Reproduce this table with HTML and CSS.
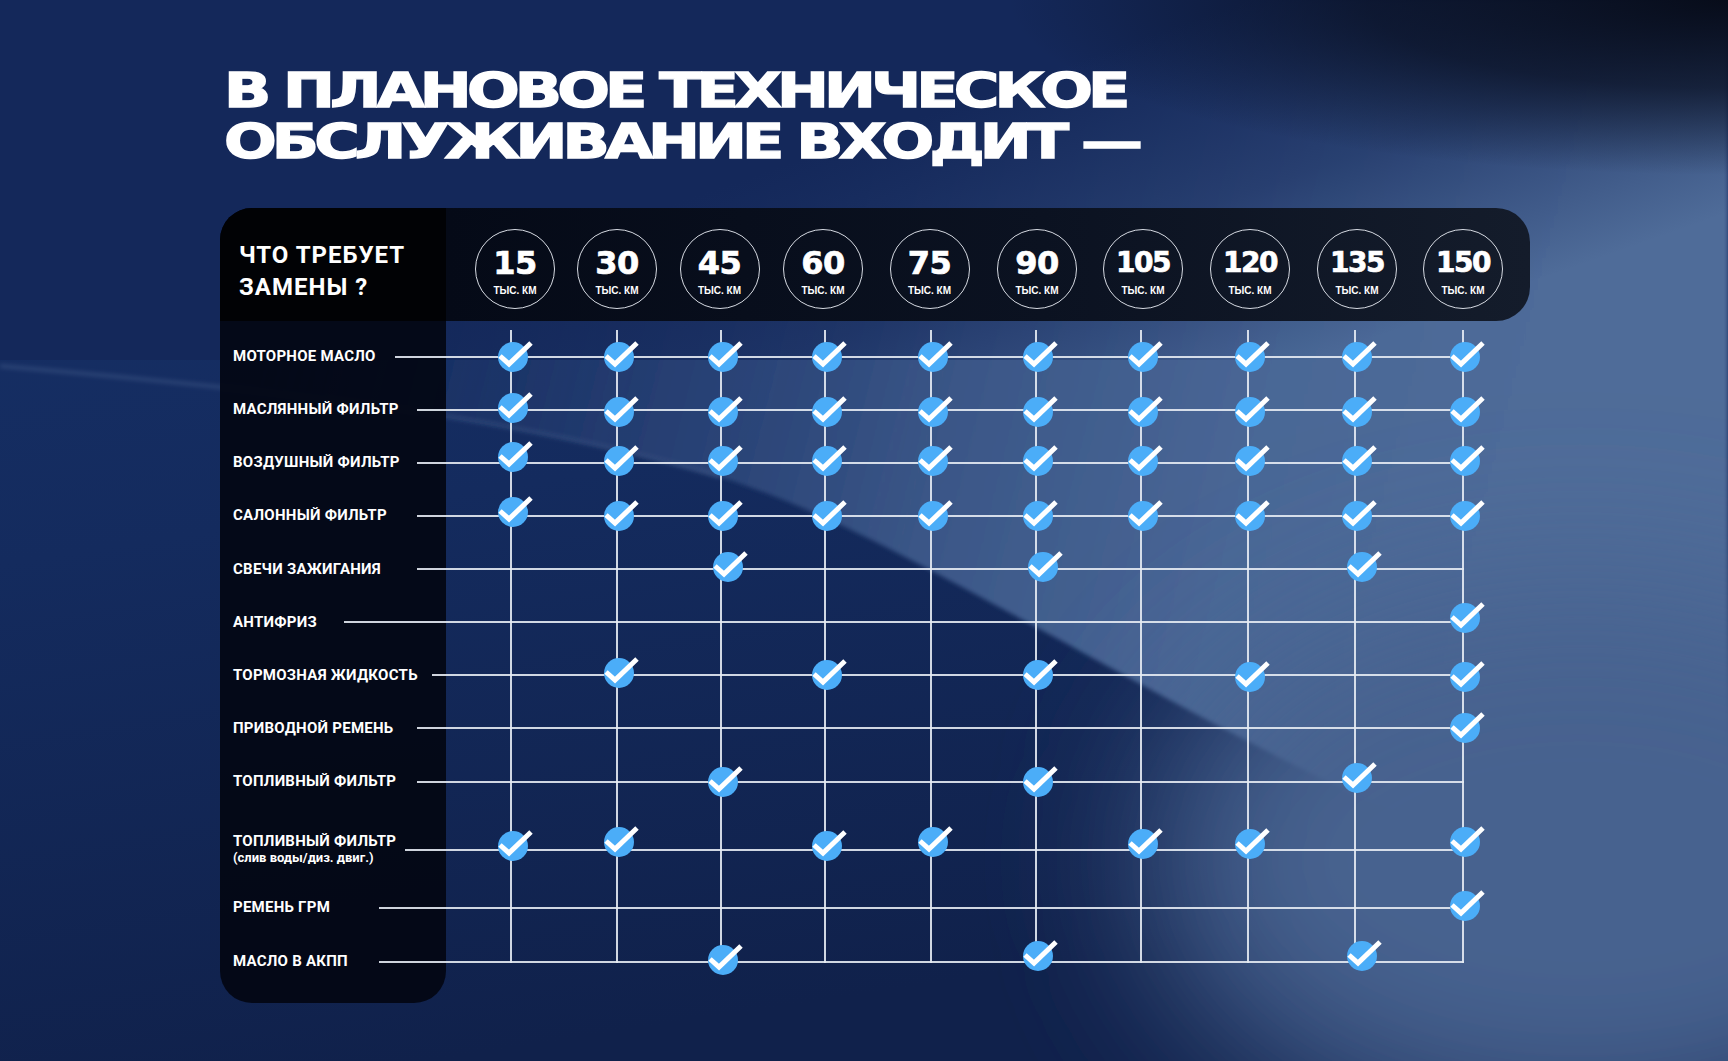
FILE: index.html
```html
<!DOCTYPE html>
<html lang="ru">
<head>
<meta charset="utf-8">
<title>Плановое ТО</title>
<link rel="stylesheet" href="styles.css">
</head>
<body>
<svg class="bg" viewBox="0 0 1728 1061" preserveAspectRatio="none" aria-hidden="true">
  <defs>
    <linearGradient id="gBase" x1="0" y1="0" x2="0.25" y2="1">
      <stop offset="0" stop-color="#17326a"/>
      <stop offset="0.5" stop-color="#142b5e"/>
      <stop offset="1" stop-color="#10214b"/>
    </linearGradient>
    <linearGradient id="gGlow" gradientUnits="userSpaceOnUse" x1="300" y1="200" x2="1500" y2="500">
      <stop offset="0" stop-color="#183265" stop-opacity="0"/>
      <stop offset="0.3" stop-color="#263f73" stop-opacity="0.85"/>
      <stop offset="0.55" stop-color="#3a5687"/>
      <stop offset="0.8" stop-color="#4a6796"/>
      <stop offset="1" stop-color="#4f6c99"/>
    </linearGradient>
    <linearGradient id="gTop" gradientUnits="userSpaceOnUse" x1="1250" y1="0" x2="1370" y2="340">
      <stop offset="0" stop-color="#14285a" stop-opacity="1"/>
      <stop offset="0.5" stop-color="#14285a" stop-opacity="0.62"/>
      <stop offset="1" stop-color="#14285a" stop-opacity="0"/>
    </linearGradient>
    <radialGradient id="gCorner" gradientUnits="userSpaceOnUse" cx="0" cy="0" r="1" gradientTransform="translate(1728 0) scale(720 175)">
      <stop offset="0" stop-color="#070c1a" stop-opacity="1"/>
      <stop offset="0.5" stop-color="#080e1e" stop-opacity="0.7"/>
      <stop offset="1" stop-color="#0a1224" stop-opacity="0"/>
    </radialGradient>
    <filter id="fSoft" x="-10%" y="-10%" width="120%" height="120%"><feGaussianBlur stdDeviation="2"/></filter>
    <filter id="fBlur" x="-50%" y="-50%" width="200%" height="200%"><feGaussianBlur stdDeviation="80"/></filter>
  </defs>
  <rect width="1728" height="1061" fill="url(#gBase)"/>
  <path d="M0,366 C300,392 520,418 720,477 C830,512 930,570 1060,640 C1250,745 1480,870 1728,940 L1728,0 L0,0 Z" fill="url(#gGlow)" filter="url(#fSoft)"/>
  <ellipse cx="1580" cy="860" rx="430" ry="280" fill="#46628f" filter="url(#fBlur)"/>
  <path d="M0,366 C300,392 520,418 720,477" fill="none" stroke="#9db2d8" stroke-opacity="0.16" stroke-width="4" filter="url(#fSoft)"/>
  <rect x="0" y="0" width="1728" height="360" fill="url(#gTop)"/>
  <rect x="800" y="0" width="928" height="200" fill="url(#gCorner)"/>
</svg>

<svg class="defs" aria-hidden="true">
  <symbol id="ck" viewBox="0 0 40 34">
    <circle cx="17" cy="18" r="15" fill="#4badf8"/>
    <polyline points="4,17 13,25 35,4" fill="none" stroke="#ffffff" stroke-width="5"/>
  </symbol>
</svg>

<main class="page">
  <h1 class="title"><span>В ПЛАНОВОЕ ТЕХНИЧЕСКОЕ</span><span>ОБСЛУЖИВАНИЕ ВХОДИТ —</span></h1>

  <section class="table">
    <div class="lcol-bg"></div>
    <div class="hdr-label">ЧТО ТРЕБУЕТ<br>ЗАМЕНЫ ?</div>
    <div class="hdr-cols">
      <div class="km"><b>15</b><small>ТЫС. КМ</small></div>
      <div class="km"><b>30</b><small>ТЫС. КМ</small></div>
      <div class="km"><b>45</b><small>ТЫС. КМ</small></div>
      <div class="km"><b>60</b><small>ТЫС. КМ</small></div>
      <div class="km"><b>75</b><small>ТЫС. КМ</small></div>
      <div class="km"><b>90</b><small>ТЫС. КМ</small></div>
      <div class="km w3"><b>105</b><small>ТЫС. КМ</small></div>
      <div class="km w3"><b>120</b><small>ТЫС. КМ</small></div>
      <div class="km w3"><b>135</b><small>ТЫС. КМ</small></div>
      <div class="km w3"><b>150</b><small>ТЫС. КМ</small></div>
    </div>

    <div class="body">
      <i class="vl c1"></i><i class="vl c2"></i><i class="vl c3"></i><i class="vl c4"></i><i class="vl c5"></i>
      <i class="vl c6"></i><i class="vl c7"></i><i class="vl c8"></i><i class="vl c9"></i><i class="vl c10"></i>

      <div class="row r1">
        <span class="lbl">МОТОРНОЕ МАСЛО</span><i class="hl s175"></i>
        <svg class="ck c1"><use href="#ck"/></svg><svg class="ck c2"><use href="#ck"/></svg><svg class="ck c3"><use href="#ck"/></svg><svg class="ck c4"><use href="#ck"/></svg><svg class="ck c5"><use href="#ck"/></svg>
        <svg class="ck c6"><use href="#ck"/></svg><svg class="ck c7"><use href="#ck"/></svg><svg class="ck c8"><use href="#ck"/></svg><svg class="ck c9"><use href="#ck"/></svg><svg class="ck c10"><use href="#ck"/></svg>
      </div>
      <div class="row r2">
        <span class="lbl">МАСЛЯННЫЙ ФИЛЬТР</span><i class="hl s197"></i>
        <svg class="ck c1 u2"><use href="#ck"/></svg><svg class="ck c2 d2"><use href="#ck"/></svg><svg class="ck c3 d2"><use href="#ck"/></svg><svg class="ck c4 d2"><use href="#ck"/></svg><svg class="ck c5 d2"><use href="#ck"/></svg>
        <svg class="ck c6 d2"><use href="#ck"/></svg><svg class="ck c7 d2"><use href="#ck"/></svg><svg class="ck c8 d2"><use href="#ck"/></svg><svg class="ck c9 d2"><use href="#ck"/></svg><svg class="ck c10 d2"><use href="#ck"/></svg>
      </div>
      <div class="row r3">
        <span class="lbl">ВОЗДУШНЫЙ ФИЛЬТР</span><i class="hl s197"></i>
        <svg class="ck c1 u6"><use href="#ck"/></svg><svg class="ck c2 u2"><use href="#ck"/></svg><svg class="ck c3 u2"><use href="#ck"/></svg><svg class="ck c4 u2"><use href="#ck"/></svg><svg class="ck c5 u2"><use href="#ck"/></svg>
        <svg class="ck c6 u2"><use href="#ck"/></svg><svg class="ck c7 u2"><use href="#ck"/></svg><svg class="ck c8 u2"><use href="#ck"/></svg><svg class="ck c9 u2"><use href="#ck"/></svg><svg class="ck c10 u2"><use href="#ck"/></svg>
      </div>
      <div class="row r4">
        <span class="lbl">САЛОННЫЙ ФИЛЬТР</span><i class="hl s197"></i>
        <svg class="ck c1 u4"><use href="#ck"/></svg><svg class="ck c2"><use href="#ck"/></svg><svg class="ck c3"><use href="#ck"/></svg><svg class="ck c4"><use href="#ck"/></svg><svg class="ck c5"><use href="#ck"/></svg>
        <svg class="ck c6"><use href="#ck"/></svg><svg class="ck c7"><use href="#ck"/></svg><svg class="ck c8"><use href="#ck"/></svg><svg class="ck c9"><use href="#ck"/></svg><svg class="ck c10"><use href="#ck"/></svg>
      </div>
      <div class="row r5">
        <span class="lbl">СВЕЧИ ЗАЖИГАНИЯ</span><i class="hl s197"></i>
        <svg class="ck c3 u2"><use href="#ck"/></svg><svg class="ck c6 u2"><use href="#ck"/></svg><svg class="ck c9 u2"><use href="#ck"/></svg>
      </div>
      <div class="row r6">
        <span class="lbl">АНТИФРИЗ</span><i class="hl s124"></i>
        <svg class="ck c10 u4"><use href="#ck"/></svg>
      </div>
      <div class="row r7">
        <span class="lbl">ТОРМОЗНАЯ ЖИДКОСТЬ</span><i class="hl s212"></i>
        <svg class="ck c2 u2"><use href="#ck"/></svg><svg class="ck c4"><use href="#ck"/></svg><svg class="ck c6"><use href="#ck"/></svg><svg class="ck c8 d2"><use href="#ck"/></svg><svg class="ck c10 d2"><use href="#ck"/></svg>
      </div>
      <div class="row r8">
        <span class="lbl">ПРИВОДНОЙ РЕМЕНЬ</span><i class="hl s197"></i>
        <svg class="ck c10"><use href="#ck"/></svg>
      </div>
      <div class="row r9">
        <span class="lbl">ТОПЛИВНЫЙ ФИЛЬТР</span><i class="hl s197"></i>
        <svg class="ck c3"><use href="#ck"/></svg><svg class="ck c6"><use href="#ck"/></svg><svg class="ck c9 u4"><use href="#ck"/></svg>
      </div>
      <div class="row r10">
        <span class="lbl">ТОПЛИВНЫЙ ФИЛЬТР<small>(слив воды/диз. двиг.)</small></span><i class="hl s185"></i>
        <svg class="ck c1 u4"><use href="#ck"/></svg><svg class="ck c2 u8"><use href="#ck"/></svg><svg class="ck c4 u4"><use href="#ck"/></svg><svg class="ck c5 u8"><use href="#ck"/></svg>
        <svg class="ck c7 u6"><use href="#ck"/></svg><svg class="ck c8 u6"><use href="#ck"/></svg><svg class="ck c10 u8"><use href="#ck"/></svg>
      </div>
      <div class="row r11">
        <span class="lbl">РЕМЕНЬ ГРМ</span><i class="hl s159"></i>
        <svg class="ck c10 u2"><use href="#ck"/></svg>
      </div>
      <div class="row r12">
        <span class="lbl">МАСЛО В АКПП</span><i class="hl s159"></i>
        <svg class="ck c3 u2"><use href="#ck"/></svg><svg class="ck c6 u6"><use href="#ck"/></svg><svg class="ck c9 u6 r5"><use href="#ck"/></svg>
      </div>
    </div>
  </section>
</main>
</body>
</html>
```

FILE: styles.css
```css
* { box-sizing: border-box; }

html, body { margin: 0; padding: 0; }

body {
  width: 1728px;
  height: 1061px;
  overflow: hidden;
  position: relative;
  background: #142b5e;
  color: #ffffff;
  font-family: Roboto, "Liberation Sans", Arial, sans-serif;
}

.bg {
  position: absolute;
  left: 0;
  top: 0;
  width: 1728px;
  height: 1061px;
  z-index: 0;
}

.defs {
  position: absolute;
  width: 0;
  height: 0;
  overflow: hidden;
}

.page {
  position: relative;
  z-index: 1;
  padding: 65px 0 0 220px;
}

.title {
  width: max-content;
  margin: 0 0 41px 4px;
  font-family: "DejaVu Sans", "Liberation Sans", sans-serif;
  font-weight: 700;
  font-size: 48px;
  line-height: 51px;
  letter-spacing: -3.8px;
  white-space: nowrap;
  -webkit-text-stroke: 1.4px #ffffff;
  transform: scaleX(1.293);
  transform-origin: left top;
}

.title span { display: block; }

/* ---------- table ---------- */
.table {
  display: grid;
  grid-template-columns: 226px 1084px;
  grid-template-rows: 113px auto;
  width: 1310px;
}

.lcol-bg {
  grid-column: 1;
  grid-row: 1 / 3;
  background: rgba(3, 7, 18, 0.92);
  border-radius: 32px 0 32px 32px;
}

.hdr-label {
  grid-column: 1;
  grid-row: 1;
  background: #010205;
  border-top-left-radius: 32px;
  padding: 31px 0 0 19px;
  font-weight: 700;
  font-size: 24px;
  line-height: 32px;
  letter-spacing: 1px;
  white-space: nowrap;
}

.hdr-cols {
  grid-column: 2;
  grid-row: 1;
  background: linear-gradient(90deg, #050a17 0%, #0b1221 55%, #141c2b 100%);
  border-radius: 0 34px 34px 0;
  display: grid;
  grid-template-columns: 102px 102px 103px 104px 109px 106px 106px 108px 106px 106px;
  padding: 21px 0 0 18px;
  align-items: start;
}

.km {
  justify-self: center;
  width: 80px;
  height: 80px;
  border: 1.5px solid #d6dae2;
  border-radius: 50%;
  display: flex;
  flex-direction: column;
  align-items: center;
  padding-top: 20px;
}

.km b {
  font-family: "DejaVu Sans", "Liberation Sans", sans-serif;
  font-weight: 700;
  font-size: 32px;
  line-height: 26px;
  letter-spacing: -0.5px;
  -webkit-text-stroke: 0.7px #ffffff;
}

.km.w3 b {
  font-size: 28px;
  letter-spacing: -1.5px;
}

.km small {
  font-family: "Liberation Sans", Arial, sans-serif;
  font-weight: 700;
  font-size: 10px;
  line-height: 10px;
  margin-top: 10px;
  white-space: nowrap;
}

/* ---------- body grid ---------- */
.body {
  grid-column: 1 / 3;
  grid-row: 2;
  display: grid;
  grid-template-columns: 226px 12px 106px 105px 103px 106px 105px 105px 106px 107px 108px 108px 13px;
  grid-template-rows: 9px repeat(9, 53.125px) 82.9px 33.1px 74.9px;
  padding-bottom: 4px;
}

.row { display: contents; }

.r1 > * { grid-row: 2; }
.r2 > * { grid-row: 3; }
.r3 > * { grid-row: 4; }
.r4 > * { grid-row: 5; }
.r5 > * { grid-row: 6; }
.r6 > * { grid-row: 7; }
.r7 > * { grid-row: 8; }
.r8 > * { grid-row: 9; }
.r9 > * { grid-row: 10; }
.r10 > * { grid-row: 11; }
.r11 > * { grid-row: 12; }
.r12 > * { grid-row: 13; }

.c1 { grid-column: 3; }
.c2 { grid-column: 4; }
.c3 { grid-column: 5; }
.c4 { grid-column: 6; }
.c5 { grid-column: 7; }
.c6 { grid-column: 8; }
.c7 { grid-column: 9; }
.c8 { grid-column: 10; }
.c9 { grid-column: 11; }
.c10 { grid-column: 12; }

.vl {
  grid-row: 2 / -1;
  justify-self: center;
  width: 2px;
  margin-bottom: 36.45px;
  background: rgba(230, 235, 243, 0.9);
  z-index: 1;
}

.hl {
  grid-column: 1 / 13;
  align-self: center;
  height: 2px;
  margin-left: var(--s, 197px);
  margin-right: 53px;
  background: rgba(230, 235, 243, 0.9);
  z-index: 1;
}

.s124 { --s: 124px; }
.s159 { --s: 159px; }
.s175 { --s: 175px; }
.s185 { --s: 185px; }
.s197 { --s: 197px; }
.s212 { --s: 212px; }

.lbl {
  grid-column: 1;
  align-self: center;
  padding-left: 13px;
  font-weight: 700;
  font-size: 15px;
  line-height: 17px;
  letter-spacing: 0.25px;
  white-space: nowrap;
  z-index: 1;
}

.lbl small {
  display: block;
  font-size: 13px;
  line-height: 16px;
  letter-spacing: 0;
}

.ck {
  align-self: center;
  justify-self: center;
  width: 40px;
  height: 34px;
  z-index: 2;
  overflow: visible;
  transform: translate(calc(5px + var(--dx, 0px)), calc(-1px + var(--dy, 0px)));
}

.u2 { --dy: -2px; }
.u4 { --dy: -4px; }
.u6 { --dy: -6px; }
.u8 { --dy: -8px; }
.d2 { --dy: 2px; }
.r5 { --dx: 5px; }
```
